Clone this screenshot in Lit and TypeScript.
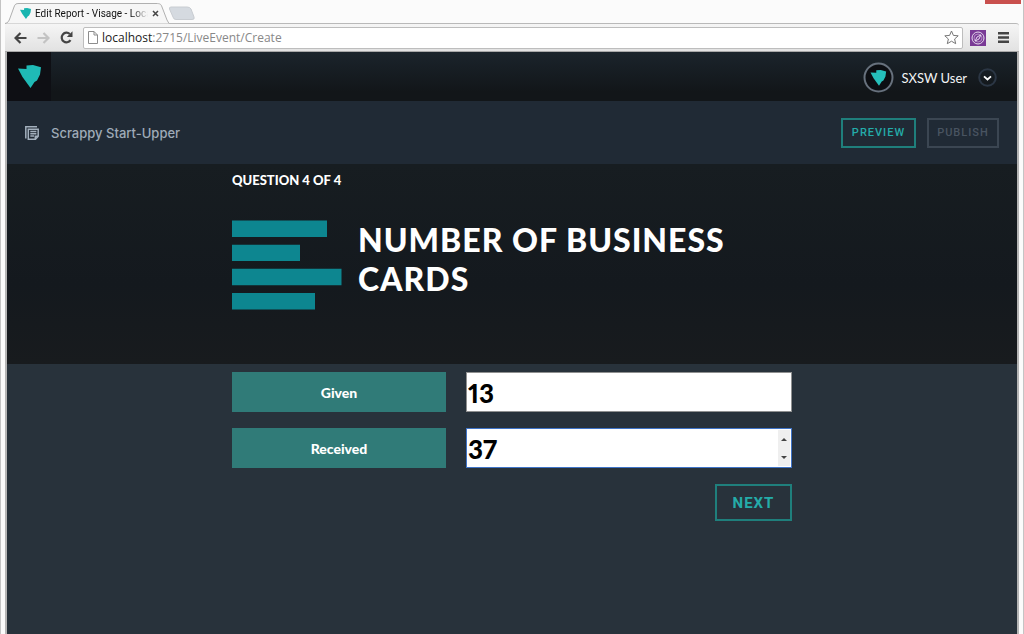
import { LitElement, html, css, svg } from "lit";
import { customElement, property, state } from "lit/decorators.js";

const gem = svg`<path d="M0 3.5 L8.5 4 L8.5 0.4 L15 0 L23 2.2 L22 9.5 L19 15.5 L16.5 17 L12.5 23 L4.5 12 Z"></path>`;

@customElement("browser-chrome")
class BrowserChrome extends LitElement {
  static styles = css`
    :host { display: block; }
    .strip { display: flex; height: 23px; align-items: flex-end; margin: 0 2px 0 5px; }
    .tab { position: relative; display: flex; align-items: center; width: 164px; height: 20px; box-sizing: border-box; padding-left: 15px; gap: 4px; color: #111; }
    .shape { position: absolute; left: 0; bottom: -1px; z-index: 0; }
    .fav, .title, .x { position: relative; }
    .fav { flex: none; }
    .title { width: 113px; font-family: Roboto, sans-serif; font-size: 10px; white-space: nowrap; -webkit-mask-image: linear-gradient(90deg, #000 86%, transparent); mask-image: linear-gradient(90deg, #000 86%, transparent); }
    button { border: 0; background: none; padding: 0; display: flex; align-items: center; justify-content: center; }
    .new { margin-bottom: 2px; }
    .close { margin-left: auto; align-self: flex-start; width: 36px; height: 4px; background: #c9504e; }
    .bar { display: flex; align-items: center; height: 29px; box-sizing: border-box; padding: 0 6px 0 9px; border-top: 1px solid #b9b9b9; background: linear-gradient(#f5f5f5, #e2e2e2); margin: 0 4px 0 5px; border-radius: 0 3px 0 0; border-bottom: 1px solid #a8a8a8; }
    .nav { width: 23px; flex: none; justify-content: flex-start; }
    .omni { flex: 1; display: flex; align-items: center; gap: 4px; height: 22px; box-sizing: border-box; background: #fff; border: 1px solid #bdbdbd; border-radius: 2px; padding: 0 3px 0 4px; margin-right: 7px; }
    .host { color: #222; }
    .address { flex: 1; color: #888; font-size: 12px; line-height: 18px; font-family: "Open Sans", sans-serif; text-decoration: none; }
    .menu { width: 20px; margin-left: 7px; }
  `;
  render() {
    return html`
      <div class="strip">
        <div class="tab">
          <svg class="shape" width="164" height="21"><path d="M0 20.5 C3 20 4 18 5 15 L9 4 C10 1 11 .5 14 .5 H151 C155 .5 156 1 157 4 L162 17 L164 20.5" fill="#f6f6f6" stroke="#b0b0b0"></path></svg>
          <svg class="fav" width="11" height="11" viewBox="0 0 23 23" fill="#18b5b0">${gem}</svg>
          <span class="title">Edit Report - Visage - Loca</span>
          <button class="x" aria-label="Close tab"><svg width="7" height="7" viewBox="0 0 7 7" stroke="#444" stroke-width="1.5"><path d="M1 1 L6 6 M6 1 L1 6"></path></svg></button>
        </div>
        <button class="new" aria-label="New tab"><svg width="26" height="15" viewBox="0 0 26 15"><path d="M2 1 H18 Q21 1 22 3 L25 11 Q26 13.5 23 13.5 H7 Q4.500 13.5 4 11 L0.500 3 Q0 1 2 1Z" fill="#d5dae0" stroke="#c8ccd1"></path></svg></button>
        <div class="close"></div>
      </div>
      <div class="bar">
        <button class="nav" aria-label="Back"><svg width="13" height="12" viewBox="0 0 13 12" fill="none" stroke="#444" stroke-width="2.200"><path d="M12.500 6 H2 M6.500 1 L1.500 6 L6.500 11"></path></svg></button>
        <button class="nav" aria-label="Forward"><svg width="13" height="12" viewBox="0 0 13 12" fill="none" stroke="#c3c3c3" stroke-width="2.200"><path d="M0.500 6 H11 M6.500 1 L11.500 6 L6.500 11"></path></svg></button>
        <button class="nav" aria-label="Reload"><svg width="14" height="13" viewBox="0 0 14 13"><path d="M10.500 9.200 A4.800 4.800 0 1 1 9.800 3" fill="none" stroke="#444" stroke-width="2.200"></path><path d="M12.500 0.300 V6 H6.800Z" fill="#444"></path></svg></button>
        <div class="omni">
          <svg width="10" height="13" viewBox="0 0 10 13" fill="#fff" stroke="#8d8d8d"><path d="M.5 .5 H6 L9.500 4 V12.500 H.5Z M6 .5 V4 H9.500"></path></svg>
          <a class="address" href="#"><span class="host">localhost</span>:2715/LiveEvent/Create</a>
          <svg width="15" height="15" viewBox="0 0 15 15" fill="#fff" stroke="#777"><path d="M7.500 1 L9.400 5.400 L14.200 5.800 L10.600 9 L11.700 13.700 L7.500 11.200 L3.300 13.700 L4.400 9 L0.800 5.800 L5.600 5.400Z"></path></svg>
        </div>
        <svg width="16" height="16" viewBox="0 0 16 16"><rect width="16" height="16" fill="#7a3a96"></rect><g fill="none" stroke="#e6d8ee"><circle cx="8" cy="8" r="6"></circle><circle cx="8" cy="8" r="4" opacity=".5"></circle><path d="M10.800 5 L9 9 L5.200 11 L7 7Z"></path></g></svg>
        <button class="menu" aria-label="Menu"><svg width="11" height="11" viewBox="0 0 11 11" fill="#444"><path d="M0 0H11V2.400H0Z M0 4.300H11V6.700H0Z M0 8.600H11V11H0Z"></path></svg></button>
      </div>`;
  }
}

@customElement("number-field")
class NumberField extends LitElement {
  @property() label = "";
  @property({ type: Number }) value = 0;
  @property({ type: Boolean }) active = false;
  static styles = css`
    :host { display: grid; grid-template-columns: 214fr 326fr; column-gap: 20px; height: 40px; }
    label { display: flex; align-items: center; justify-content: center; background: #307b78; color: #fff; font-size: 14px; font-weight: 900; }
    .box { display: flex; background: #fff; border: 1px solid #8f9090; min-width: 0; }
    .box.active { border-color: #3f74c8; }
    input { flex: 1; min-width: 0; border: 0; outline: 0; padding: 2px 1px 0; background: none; color: #000; font: 900 26px Lato, sans-serif; font-variant-numeric: proportional-nums; appearance: textfield; -moz-appearance: textfield; }
    input::-webkit-inner-spin-button { display: none; }
    .steps { display: flex; flex-direction: column; width: 12px; margin: 1px; background: #efefef; }
    .steps button { flex: 1; border: 0; padding: 0; background: none; display: flex; align-items: center; justify-content: center; }
  `;
  private step(by: number) {
    this.value += by;
  }
  render() {
    return html`
      <label for="n">${this.label}</label>
      <div class="box ${this.active ? "active" : ""}">
        <input id="n" type="number" .value=${String(this.value)}
          @input=${(e: Event) => { this.value = Number((e.target as HTMLInputElement).value); }} />
        ${this.active
          ? html`<div class="steps">
              <button aria-label="Increase" @click=${() => this.step(1)}><svg width="6" height="3"><path d="M0 3 L3 0 L6 3Z" fill="#444"></path></svg></button>
              <button aria-label="Decrease" @click=${() => this.step(-1)}><svg width="6" height="3"><path d="M0 0 L3 3 L6 0Z" fill="#444"></path></svg></button>
            </div>`
          : null}
      </div>`;
  }
}

@customElement("app-root")
class AppRoot extends LitElement {
  @state() private fields = [
    { label: "Given", value: 13, active: false },
    { label: "Received", value: 37, active: true },
  ];
  static styles = css`
    :host { display: flex; flex-direction: column; min-height: 100vh; box-sizing: border-box; background: #fbfbfb; border-left: 1px solid #c4c4c4; border-right: 1px solid #c4c4c4; font-family: Lato, sans-serif; }
    browser-chrome { margin-left: -1px; }
    .page { flex: 1; display: flex; flex-direction: column; margin: 0 4px; border: solid #b5b5b5; border-width: 0 2px; background: #28323b; }
    .top { display: flex; align-items: center; height: 49px; background: linear-gradient(#1b242c, #121619 80%); color: #f2f4f5; box-sizing: border-box; }
    .logo { width: 44px; align-self: stretch; display: flex; align-items: center; justify-content: center; background: #0e0f14; }
    .user { margin-left: auto; display: flex; align-items: center; font-size: 13px; padding: 2px 20px 0 0; }
    .name { margin: 0 11px 0 7px; font-weight: 400; }
    .user button, .logo { padding: 0; border: 0; }
    .user button { background: none; display: flex; }
    .sub { display: flex; align-items: center; height: 63px; padding: 0 18px; background: #202a35; color: #9fabb8; }
    .sub h1 { flex: 1; margin: 0 0 0 12px; font: 500 13px Inter, sans-serif; }
    .btn { box-sizing: border-box; background: none; border: 2px solid #1f7f7c; color: #24aca9; font-family: Roboto, sans-serif; font-weight: 500; letter-spacing: 1px; padding: 0; }
    .small { height: 30px; font-size: 11px; min-width: 75px; }
    .muted { border-color: #3b4652; color: #495461; min-width: 72px; margin-left: 11px; }
    .hero { height: 200px; background: linear-gradient(#171d21, #14191e 60%, #181b1e); color: #fff; }
    .col { width: 560px; max-width: 100%; margin: 0 auto; }
    .count { margin: 0; padding-top: 8px; font-size: 13px; line-height: 16px; font-weight: 900; }
    .head { display: flex; gap: 16px; padding-top: 32px; }
    .head svg { flex: none; }
    h2 { margin: 0; font-size: 32px; line-height: 39px; font-weight: 900; letter-spacing: 1px; }
    form { display: flex; flex-direction: column; gap: 16px; padding-top: 8px; }
    .next { align-self: flex-end; width: 77px; height: 37px; font-size: 15px; font-weight: 700; }
  `;
  render() {
    return html`
      <browser-chrome></browser-chrome>
      <div class="page">
        <header class="top">
          <a class="logo" href="#" aria-label="Home"><svg width="23" height="23" viewBox="0 0 23 23" fill="#1fbab6">${gem}</svg></a>
          <div class="user">
            <svg width="31" height="31" viewBox="0 0 31 31"><circle cx="15.500" cy="15.500" r="14" fill="#0c0e12" stroke="#67717d" stroke-width="2"></circle><g transform="translate(7.500 8) scale(.68)" fill="#25bfba">${gem}</g></svg>
            <span class="name">SXSW User</span>
            <button aria-label="Account menu"><svg width="19" height="19" viewBox="0 0 19 19" fill="none"><circle cx="9.500" cy="9.500" r="8.300" stroke="#2b3644" stroke-width="2"></circle><path d="M6 8.300 L9.500 11.500 L13 8.300" stroke="#fff" stroke-width="1.800"></path></svg></button>
          </div>
        </header>
        <div class="sub">
          <svg width="14" height="14" viewBox="0 0 14 14" fill="none" stroke="#a3b0bd" stroke-width="1.500"><path d="M12 .8 H.8 V12.500"></path><path d="M3.300 3.200 H13.200 V10.300 L10.500 13.200 H3.300Z M10.300 13.200 V10.300 H13.200 M5.300 5.500 H11.400 M5.300 7.700 H11.400 M5.300 10 H9"></path></svg>
          <h1>Scrappy Start-Upper</h1>
          <button class="btn small">PREVIEW</button>
          <button class="btn small muted">PUBLISH</button>
        </div>
        <section class="hero">
          <div class="col">
            <p class="count">QUESTION 4 OF 4</p>
            <div class="head">
              <svg width="110" height="90" viewBox="0 0 110 90" fill="#0d8690"><path d="M0 .5H95V17H0Z M0 24.700H68V41H0Z M0 48.800H109.500V65.300H0Z M0 73H83V89.500H0Z"></path></svg>
              <h2>NUMBER OF BUSINESS CARDS</h2>
            </div>
          </div>
        </section>
        <form class="col" @submit=${(e: Event) => e.preventDefault()}>
          ${this.fields.map((f) => html`<number-field .label=${f.label} .value=${f.value} .active=${f.active}></number-field>`)}
          <button class="btn next">NEXT</button>
        </form>
      </div>`;
  }
}
